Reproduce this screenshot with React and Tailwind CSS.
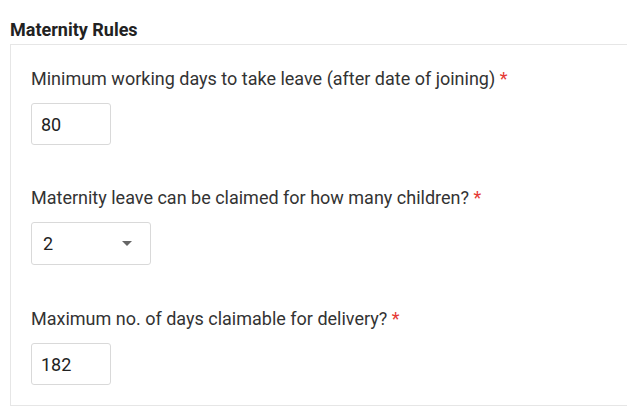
export default function App() {
  const font = { fontFamily: '"Roboto", "Liberation Sans", sans-serif' };
  return (
    <div className="w-[627px] h-[420px] overflow-hidden bg-white text-[#333]" style={font}>
      <h2 className="pl-[10px] pt-[20px] text-[18px] leading-[20px] font-bold text-[#222]">Maternity Rules</h2>
      <div className="mt-[4px] ml-[10px] w-[640px] border border-[#e6e6e6] pl-[20px] pt-[22px] pb-[20px]">
        <Field label="Minimum working days to take leave (after date of joining)">
          <input
            readOnly
            value="80"
            className="w-[80px] h-[42px] rounded-[3px] border border-[#d9d9d9] px-[9px] text-[18px] text-[#222] outline-none"
          />
        </Field>
        <Field label="Maternity leave can be claimed for how many children?" className="mt-[41px]">
          <div className="w-[120px] h-[43px] rounded-[3px] border border-[#d9d9d9] flex items-center justify-between pl-[11px] pr-[18px]">
            <span className="text-[18px] text-[#222]">2</span>
            <span className="w-0 h-0 border-l-[5px] border-r-[5px] border-t-[5px] border-l-transparent border-r-transparent border-t-[#666]" />
          </div>
        </Field>
        <Field label="Maximum no. of days claimable for delivery?" className="mt-[42px]">
          <input
            readOnly
            value="182"
            className="w-[80px] h-[42px] rounded-[3px] border border-[#d9d9d9] px-[9px] text-[18px] text-[#222] outline-none"
          />
        </Field>
      </div>
    </div>
  );
}

function Field({ label, children, className = '' }) {
  return (
    <div className={className}>
      <p className="text-[18px] leading-[24px] mb-[12px]">
        {label} <span className="text-[#e53935]">*</span>
      </p>
      {children}
    </div>
  );
}
